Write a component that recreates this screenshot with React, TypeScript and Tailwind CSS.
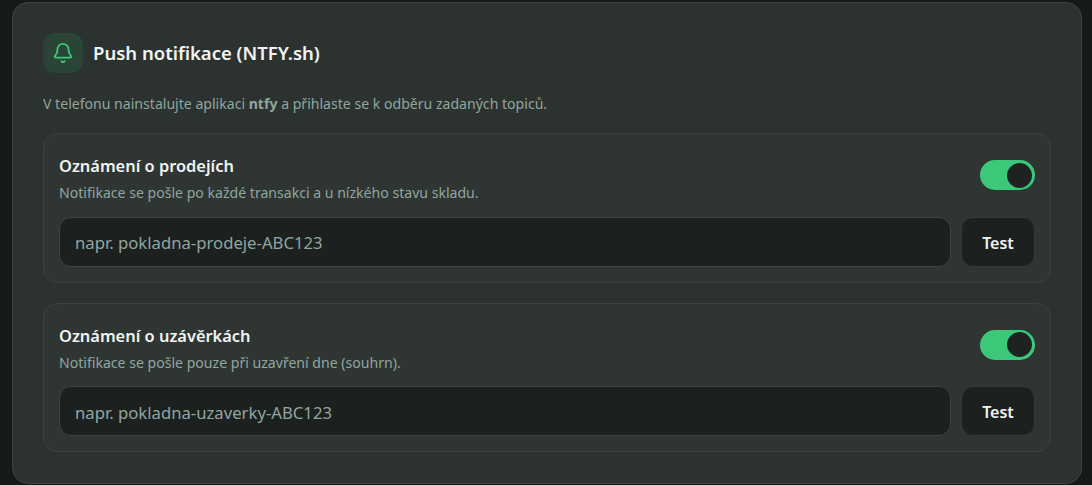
import { Bell } from 'lucide-react'

interface TopicCardProps {
  title: string
  description: string
  placeholder: string
}

function TopicCard({ title, description, placeholder }: TopicCardProps) {
  return (
    <div className="rounded-[14px] border border-[#3d4341] bg-[#2f3533] px-[15px] pt-[20px] pb-[15px]">
      <div className="flex items-start justify-between">
        <div>
          <h3 className="text-[16.4px] leading-[24px] font-semibold text-[#f0f4f2]">{title}</h3>
          <p className="mt-[5px] text-[14.08px] leading-[20px] text-[#90a69f]">{description}</p>
        </div>
        <div className="mt-[6px] flex h-[30px] w-[55px] items-center justify-end rounded-full bg-[#3cc878] pr-[3px]">
          <span className="size-[25px] rounded-full bg-[#1e2321]" />
        </div>
      </div>
      <div className="mt-[13.5px] flex gap-[10px]">
        <input
          className="h-[50px] min-w-0 flex-1 rounded-[12px] border border-[#3d4341] bg-[#1c201f] px-[15px] pt-[2px] text-[16.7px] text-[#e8ecea] outline-none placeholder:text-[#90a69f]"
          placeholder={placeholder}
        />
        <button className="h-[50px] w-[74px] rounded-[12px] border border-[#353a38] bg-[#1c201f] pt-[2px] text-[16px] font-semibold text-[#f0f4f2]">
          Test
        </button>
      </div>
    </div>
  )
}

export default function App() {
  return (
    <div className="h-[485px] overflow-hidden bg-[#151a18] pt-[2px] pr-[10px] pl-[12px] font-['Noto_Sans',sans-serif]">
      <div className="h-[482px] rounded-[16px] border border-[#3d4341] bg-[#2c3230] px-[30px] pt-[30px]">
        <div className="flex items-center gap-[10px]">
          <div className="flex size-[40px] items-center justify-center rounded-[12px] bg-[#2a4436]">
            <Bell className="size-[22px] text-[#3cc878]" strokeWidth={2} />
          </div>
          <h2 className="text-[18.5px] font-semibold text-[#f0f4f2]">Push notifikace (NTFY.sh)</h2>
        </div>
        <p className="mt-[20px] text-[14.08px] leading-[21px] text-[#90a69f]">
          V telefonu nainstalujte aplikaci <strong className="font-bold">ntfy</strong> a přihlaste se k odběru zadaných topiců.
        </p>
        <div className="mt-[19px] flex flex-col gap-[20.1px]">
          <TopicCard
            title="Oznámení o prodejích"
            description="Notifikace se pošle po každé transakci a u nízkého stavu skladu."
            placeholder="napr. pokladna-prodeje-ABC123"
          />
          <TopicCard
            title="Oznámení o uzávěrkách"
            description="Notifikace se pošle pouze při uzavření dne (souhrn)."
            placeholder="napr. pokladna-uzaverky-ABC123"
          />
        </div>
      </div>
    </div>
  )
}
